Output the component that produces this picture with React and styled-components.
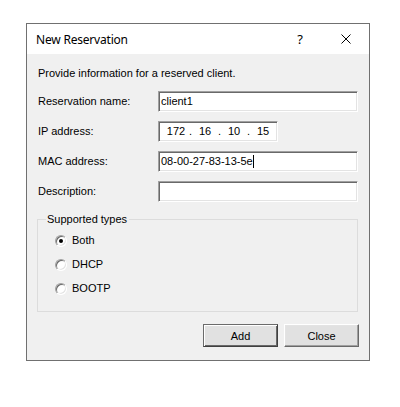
import React from "react";
import styled, { createGlobalStyle } from "styled-components";

const Global = createGlobalStyle`
  html, body { margin: 0; padding: 0; background: #ffffff; }
  body { font-family: "Liberation Sans", Arial, sans-serif; font-size: 11px; color: #000; }
`;

const Page = styled.div`
  padding: 23px 0 0 26px;
  width: 400px;
  height: 407px;
  box-sizing: border-box;
`;

const Dialog = styled.div`
  width: 344px;
  height: 338px;
  box-sizing: border-box;
  border: 1px solid #707070;
  background: #f0f0f0;
  display: flex;
  flex-direction: column;
`;

const TitleBar = styled.div`
  height: 30px;
  background: #ffffff;
  display: flex;
  align-items: center;
`;

const Title = styled.div`
  flex: 1;
  padding-left: 9px;
  font-family: "Noto Sans", "Open Sans", sans-serif;
  font-size: 12px;
  letter-spacing: -0.2px;
  color: #000;
  padding-top: 1px;
`;

const CaptionButton = styled.div`
  width: 46px;
  height: 30px;
  display: flex;
  align-items: center;
  justify-content: center;
  font-family: "Noto Sans", sans-serif;
  font-size: 13px;
  color: #000;
`;

const Body = styled.div`
  flex: 1;
  padding: 0 10px 0 10px;
  display: flex;
  flex-direction: column;
`;

const Intro = styled.div`
  margin-top: 13px;
  line-height: 13px;
  padding-left: 1px;
`;

const FormGrid = styled.div`
  margin-top: 11px;
  display: grid;
  grid-template-columns: 121px 200px;
  grid-auto-rows: 21px;
  row-gap: 9px;
  align-items: center;
`;

const Label = styled.div`
  padding-left: 1px;
  line-height: 13px;
`;

const Edit = styled.div`
  width: ${(p) => p.$w || 200}px;
  height: 21px;
  box-sizing: border-box;
  background: #fff;
  border-top: 1px solid #a0a0a0;
  border-left: 1px solid #a0a0a0;
  border-right: 1px solid #ffffff;
  border-bottom: 1px solid #ffffff;
  box-shadow: inset 1px 1px 0 #696969, inset -1px -1px 0 #e3e3e3;
  display: flex;
  align-items: center;
  padding-left: 2px;
  line-height: 13px;
  white-space: nowrap;
`;

const Octets = styled.div`
  display: flex;
  align-items: center;
  padding-left: 4px;
`;

const Octet = styled.span`
  width: 22px;
  text-align: center;
`;

const Dot = styled.span`
  width: 7px;
  text-align: center;
`;

const Caret = styled.span`
  display: inline-block;
  width: 1px;
  height: 13px;
  background: #000;
  vertical-align: middle;
`;

const Group = styled.fieldset`
  margin: 11px 0 0 0;
  padding: 8px 0 0 17px;
  width: 321px;
  height: 99px;
  box-sizing: border-box;
  border: 1px solid #dcdcdc;
  border-radius: 0;
  display: flex;
  flex-direction: column;
  gap: 11px;
  min-width: 0;
`;

const Legend = styled.legend`
  padding: 0 2px 0 1px;
  margin-left: -9px;
  line-height: 13px;
`;

const RadioRow = styled.label`
  display: flex;
  align-items: center;
  gap: 5px;
  height: 13px;
  line-height: 13px;
`;

const RadioCircle = styled.span`
  width: 12px;
  height: 12px;
  border-radius: 50%;
  box-sizing: border-box;
  background: #fff;
  border: 1px solid;
  border-color: #a0a0a0 #ffffff #ffffff #a0a0a0;
  box-shadow: inset 1px 1px 0 #696969, inset -1px -1px 0 #e3e3e3;
  display: flex;
  align-items: center;
  justify-content: center;
  &::after {
    content: "";
    width: 4px;
    height: 4px;
    border-radius: 50%;
    background: ${(p) => (p.$on ? "#000" : "transparent")};
  }
`;

const ButtonRow = styled.div`
  display: flex;
  justify-content: flex-end;
  gap: 6px;
  margin-top: 12px;
  padding-right: 0;
`;

const Button = styled.div`
  width: 75px;
  height: 23px;
  box-sizing: border-box;
  background: #e1e1e1;
  display: flex;
  align-items: center;
  justify-content: center;
  border: 1px solid;
  border-color: ${(p) => (p.$default ? "#6b6b6b #404040 #404040 #6b6b6b" : "#ffffff #696969 #696969 #ffffff")};
  box-shadow: ${(p) =>
    p.$default
      ? "inset 1px 1px 0 #ffffff, inset -1px -1px 0 #696969"
      : "inset -1px -1px 0 #a0a0a0, inset 1px 1px 0 #e3e3e3"};
`;

const CloseIcon = () => (
  <svg width="10" height="10" viewBox="0 0 10 10">
    <path d="M0.5 0.5 L9.5 9.5 M9.5 0.5 L0.5 9.5" stroke="#000" strokeWidth="1" fill="none" />
  </svg>
);

export default function App() {
  return (
    <>
      <Global />
      <Page>
        <Dialog>
          <TitleBar>
            <Title>New Reservation</Title>
            <CaptionButton>?</CaptionButton>
            <CaptionButton>
              <CloseIcon />
            </CaptionButton>
          </TitleBar>
          <Body>
            <Intro>Provide information for a reserved client.</Intro>
            <FormGrid>
              <Label>Reservation name:</Label>
              <Edit>client1</Edit>
              <Label>IP address:</Label>
              <Edit $w={120}>
                <Octets>
                  <Octet>172</Octet>
                  <Dot>.</Dot>
                  <Octet>16</Octet>
                  <Dot>.</Dot>
                  <Octet>10</Octet>
                  <Dot>.</Dot>
                  <Octet>15</Octet>
                </Octets>
              </Edit>
              <Label>MAC address:</Label>
              <Edit>
                08-00-27-83-13-5e
                <Caret />
              </Edit>
              <Label>Description:</Label>
              <Edit />
            </FormGrid>
            <Group>
              <Legend>Supported types</Legend>
              <RadioRow>
                <RadioCircle $on />
                Both
              </RadioRow>
              <RadioRow>
                <RadioCircle />
                DHCP
              </RadioRow>
              <RadioRow>
                <RadioCircle />
                BOOTP
              </RadioRow>
            </Group>
            <ButtonRow>
              <Button $default>Add</Button>
              <Button>Close</Button>
            </ButtonRow>
          </Body>
        </Dialog>
      </Page>
    </>
  );
}
